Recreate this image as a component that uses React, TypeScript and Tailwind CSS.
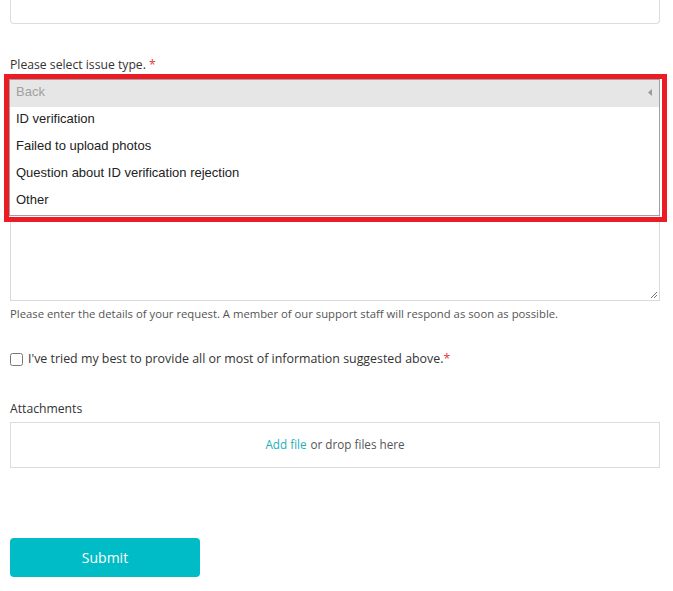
import React, { useState } from 'react';

const options = ['ID verification', 'Failed to upload photos', 'Question about ID verification rejection', 'Other'];

const App: React.FC = () => {
  const [checked, setChecked] = useState(false);

  return (
    <div className="min-h-screen w-[673px] bg-white font-['Open_Sans',sans-serif] text-[#333]">
      <div className="pl-[10px] pr-[13px]">
        {/* previous field, scrolled mostly out of view */}
        <div className="h-[24px] rounded-b-[4px] border border-t-0 border-[#dcdcdc]"></div>

        <div className="mt-[32px] text-[12.2px] leading-[18px] text-[#333]">
          Please select issue type. <span className="text-[#e53935]">*</span>
        </div>

        <div className="relative mt-[5px]">
          {/* open listbox */}
          <div className="ml-[-1px] w-[651px] border border-[#a0a0a0] bg-white font-['Liberation_Sans',Arial,sans-serif] text-[13px] text-[#222]">
            <div className="flex h-[27px] items-center justify-between bg-[#e6e6e6] pb-[4px] pl-[6px] pr-[6px] text-[#a0a0a0]">
              <span>Back</span>
              <svg width="4" height="7" viewBox="0 0 4 7" className="mr-[1px] mt-[2px]">
                <path d="M4 0 L0 3.5 L4 7 Z" fill="#9a9a9a" />
              </svg>
            </div>
            {options.map((o) => (
              <div key={o} className="flex h-[27px] items-center pb-[4px] pl-[6px]">
                {o}
              </div>
            ))}
          </div>

          {/* rest of the description textarea under the list */}
          <div className="relative h-[85px] border border-t-0 border-[#d9d9d9]">
            <svg width="8" height="8" viewBox="0 0 8 8" className="absolute bottom-[1px] right-[1px]">
              <path d="M7 1 L1 7 M7 4 L4 7" stroke="#777" strokeWidth="1" />
            </svg>
          </div>

          {/* red annotation frame */}
          <div className="pointer-events-none absolute left-[-6px] top-[-5px] h-[148px] w-[663px] border-[5px] border-[#ed1c24]"></div>
        </div>

        <p className="mt-[5px] text-[11.3px] leading-[16px] text-[#555]">
          Please enter the details of your request. A member of our support staff will respond as soon as possible.
        </p>

        <label className="mt-[28px] flex items-center text-[12.4px] text-[#333]">
          <input
            type="checkbox"
            checked={checked}
            onChange={(e) => setChecked(e.target.checked)}
            className="mr-[5px] h-[13px] w-[13px]"
          />
          <span>
            I've tried my best to provide all or most of information suggested above.
            <span className="text-[#e53935]">*</span>
          </span>
        </label>

        <div className="mt-[31px] text-[12.2px] leading-[18px] text-[#333]">Attachments</div>

        <div className="mt-[4px] flex h-[46px] items-center justify-center border border-[#dcdcdc] text-[11.7px]">
          <span className="text-[#26aebc]">Add file</span>
          <span className="ml-[4px] text-[#555]">or drop files here</span>
        </div>

        <button className="mt-[70px] h-[39px] w-[190px] rounded-[4px] bg-[#00bcc6] text-[14px] text-white">
          Submit
        </button>
      </div>
    </div>
  );
};

export default App;
